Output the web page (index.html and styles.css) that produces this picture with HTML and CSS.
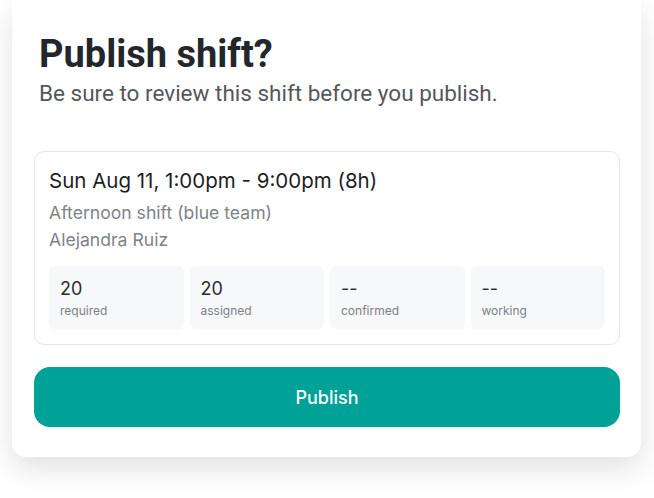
FILE: index.html
```html
<!DOCTYPE html>
<html lang="en">
<head>
    <meta charset="UTF-8">
    <meta name="viewport" content="width=device-width, initial-scale=1.0">
    <title>Publish shift?</title>
    <link rel="stylesheet" href="styles.css">
</head>
<body>
<div class="publish-modal">
    <h2>Publish shift?</h2>
    <p class="subtitle">Be sure to review this shift before you publish.</p>

    <!-- Shift summary -->
    <div class="shift-card">
        <div class="shift-time">Sun Aug 11, 1:00pm - 9:00pm (8h)</div>
        <div class="shift-meta">Afternoon shift (blue team)</div>
        <div class="shift-meta">Alejandra Ruiz</div>

        <div class="stats">
            <div class="stat">
                <div class="stat-value">20</div>
                <div class="stat-label">required</div>
            </div>
            <div class="stat">
                <div class="stat-value">20</div>
                <div class="stat-label">assigned</div>
            </div>
            <div class="stat">
                <div class="stat-value">--</div>
                <div class="stat-label">confirmed</div>
            </div>
            <div class="stat">
                <div class="stat-value">--</div>
                <div class="stat-label">working</div>
            </div>
        </div>
    </div>

    <button class="publish-btn" type="button">Publish</button>
</div>
</body>
</html>
```

FILE: styles.css
```css
body {
    margin: 0;
    padding: 0 13px 41px 12px;
    background: #fff;
    font-family: Inter, "Noto Sans", sans-serif;
}

.publish-modal {
    background: #fff;
    border-radius: 0 0 14px 14px;
    box-shadow: 0 12px 30px rgba(0, 0, 0, 0.12);
    padding: 32px 21px 30px 22px;
}

.publish-modal h2 {
    font-family: Roboto, sans-serif;
    font-weight: 700;
    font-size: 38px;
    line-height: 44px;
    color: #23262b;
    margin: 0 0 0 5px;
}

.subtitle {
    font-family: Roboto, sans-serif;
    font-size: 22.5px;
    line-height: 28px;
    color: #54575c;
    margin: 3px 0 0 5px;
}

.shift-card {
    margin-top: 44px;
    border: 1px solid #e4e5e7;
    border-radius: 10px;
    padding: 15px 14px 15px 14px;
}

.shift-time {
    font-size: 20.5px;
    line-height: 28px;
    color: #1d1f22;
    margin-bottom: 4px;
}

.shift-meta {
    font-size: 17.6px;
    line-height: 27px;
    color: #808388;
}

.stats {
    display: grid;
    grid-template-columns: repeat(4, 1fr);
    gap: 6px;
    margin-top: 13px;
}

.stat {
    box-sizing: border-box;
    height: 63px;
    background: #f7f8fa;
    border-radius: 6px;
    padding: 12px 11px 0;
}

.stat-value {
    font-size: 18px;
    line-height: 22px;
    color: #2b2d31;
}

.stat-label {
    font-size: 12px;
    line-height: 18px;
    color: #7d8085;
    margin-top: 2px;
}

.publish-btn {
    display: block;
    width: 100%;
    height: 60px;
    margin-top: 22px;
    border: none;
    border-radius: 16px;
    background-color: #00a196;
    color: #fff;
    font-family: Inter, sans-serif;
    font-size: 18px;
    font-weight: 500;
    cursor: pointer;
}
```
